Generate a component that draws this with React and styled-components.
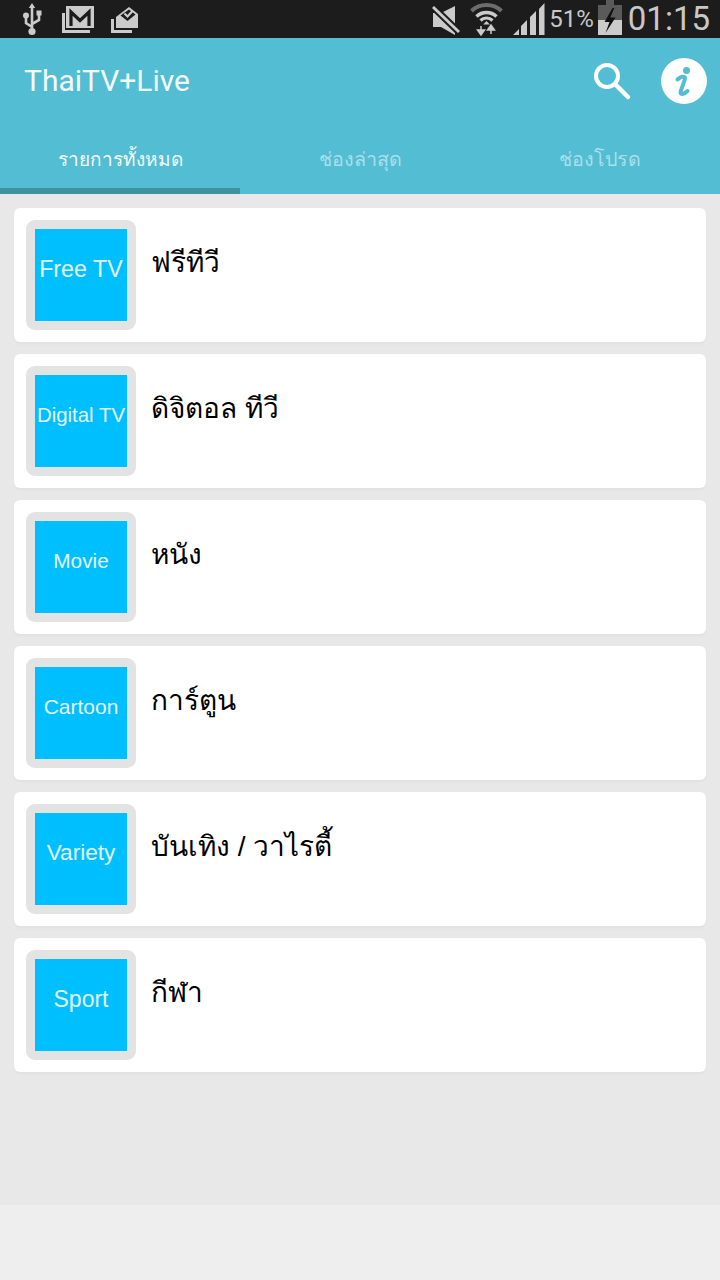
import React from "react";
import styled, { createGlobalStyle } from "styled-components";

const Global = createGlobalStyle`
  html, body { margin: 0; padding: 0; background: #eeeeee; }
  * { box-sizing: border-box; }
`;
const SANS = `"Liberation Sans", "Noto Sans", "DejaVu Sans", sans-serif`;

const Screen = styled.div`
  width: 720px; height: 1280px; display: flex; flex-direction: column; overflow: hidden;
  background: #eeeeee; font-family: ${SANS};
`;
const StatusBar = styled.div`
  height: 38px; background: #1c1c1c; display: flex; align-items: center; justify-content: space-between;
  padding: 0 10px 0 22px; color: #c8c8c8; flex: none;
`;
const StatusGroup = styled.div`display: flex; align-items: center;`;
const StatusIcon = styled.svg`
  display: block; height: 38px; flex: none; margin-left: ${p => p.$gap || 0}px;
`;
const Percent = styled.span`font: 24px Roboto, sans-serif; margin-left: 4px; line-height: 38px;`;
const Clock = styled.span`font: 33px Roboto, sans-serif; margin-left: 6px; line-height: 38px;`;
const AppBar = styled.div`flex: none; background: #52bdd3; height: 156px; display: flex; flex-direction: column;`;
const TitleRow = styled.div`
  height: 85px; display: flex; align-items: center; justify-content: space-between; padding: 0 13px 0 24px;
`;
const Title = styled.div`font: 30px Roboto, sans-serif; color: #f2fbfd;`;
const Actions = styled.div`display: flex; align-items: center; gap: 29px;`;
const ActionIcon = styled.svg`display: block; flex: none;`;
const Tabs = styled.div`flex: 1; display: flex;`;
const Tab = styled.div`
  flex: 1; display: flex; align-items: center; justify-content: center; padding-top: 7px;
  font-size: ${p => p.$active ? 19 : 19.7}px; color: ${p => p.$active ? "#f2fbfd" : "#a9dfea"};
  border-bottom: 6px solid ${p => p.$active ? "#3f929f" : "transparent"};
`;
const Content = styled.div`
  height: 1011px; flex: none; background: #e8e8e8; padding: 14px; display: flex; flex-direction: column; gap: 12px;
`;
const Card = styled.div`
  height: 134px; background: #fff; border-radius: 6px; padding: 12px; display: flex; gap: 15px;
  box-shadow: 0 2px 3px rgba(0,0,0,.03);
`;
const Thumb = styled.div`
  width: 110px; height: 110px; background: #e3e3e3; border-radius: 9px; padding: 9px; flex: none;
`;
const ThumbFace = styled.div`
  width: 92px; height: 92px; background: #00bfff; color: #e4f6fd; display: flex; align-items: center; justify-content: center;
  padding-bottom: 12px; font-size: ${p => p.$size}px; white-space: nowrap;
`;
const Label = styled.div`font-size: 28px; color: #000; line-height: 56px; height: 56px; margin-top: 15px;`;

const items = [
  ["Free TV", "ฟรีทีวี", 23.3], ["Digital TV", "ดิจิตอล ทีวี", 20.4], ["Movie", "หนัง", 20.8],
  ["Cartoon", "การ์ตูน", 21], ["Variety", "บันเทิง / วาไรตี้", 22.6], ["Sport", "กีฬา", 23],
];

const C = "#cbcbcb";
const Bg = "#1c1c1c";

const Usb = () => (
  <StatusIcon viewBox="22 0 20 38" width="20">
    <path d="M32 7v25M32 27l-6-4v-6M32 24l7-4v-6" fill="none" stroke={C} strokeWidth="2.6" />
    <path d="M32 3l3.2 5h-6.4z" fill={C} />
    <circle cx="26" cy="15.5" r="3" fill={C} />
    <rect x="36.5" y="10.5" width="5" height="5" fill={C} />
    <circle cx="32" cy="31.5" r="3.6" fill={C} />
  </StatusIcon>
);
const GmailStack = () => (
  <StatusIcon $gap={20} viewBox="62 0 32 38" width="32">
    <path d="M66 6h28v22H66z" fill={C} />
    <path d="M71 26V12l9 8.500 9-8.500v14" fill="none" stroke={Bg} strokeWidth="3.200" />
    <path d="M63.500 13v18.500H90" fill="none" stroke={C} strokeWidth="3" />
  </StatusIcon>
);
const MailCheck = () => (
  <StatusIcon $gap={16} viewBox="110 0 28 38" width="28">
    <path d="M116 17l13-10 9 7v14h-22z" fill={C} />
    <path d="M120.500 15.500l8.500-6 6.500 5-8 6.500z" fill={Bg} />
    <path d="M124.500 13.500l3 3 5-5.500" fill="none" stroke={C} strokeWidth="2.200" />
    <path d="M112.500 19v12.500H132" fill="none" stroke={C} strokeWidth="3" />
  </StatusIcon>
);
const Mute = () => (
  <StatusIcon viewBox="432 0 28 38" width="28">
    <path d="M433 13h8l14-7v29l-14-8h-8z" fill={C} />
    <path d="M431 5l29 28" stroke={Bg} strokeWidth="7" />
    <path d="M433 7l26 25" stroke={C} strokeWidth="3" />
  </StatusIcon>
);
const Wifi = () => (
  <StatusIcon $gap={10} viewBox="470 0 33 38" width="33">
    <path d="M471.500 11a22 22 0 0 1 30 0" fill="none" stroke="#6c6c6c" strokeWidth="4" />
    <path d="M476.500 16.500a14.500 14.500 0 0 1 20 0" fill="none" stroke={C} strokeWidth="3.500" />
    <path d="M480.500 20.500a8.500 8.500 0 0 1 12 0" fill="none" stroke={C} strokeWidth="3.200" />
    <path d="M486.500 21l-3.300 3.500h6.600z" fill={C} />
    <path d="M481 26v5M477.500 30h7l-3.500 5zM491 34v-5M487.500 30h7l-3.500-5z" fill={C} stroke={C} strokeWidth="1.500" />
  </StatusIcon>
);
const Signal = () => (
  <StatusIcon $gap={10} viewBox="513 0 32 38" width="32">
    <path d="M513 35l6-6v6zM521 35V26l6-6v15zM530 35V17l6-6v24zM539 35V9l5.500-6v32z" fill={C} />
  </StatusIcon>
);
const Battery = () => (
  <StatusIcon viewBox="598 0 24 38" width="24" $gap={4}>
    <rect x="606" y="0" width="8" height="5" fill="#5a5a5a" />
    <rect x="598" y="5" width="24" height="15" fill="#5a5a5a" />
    <rect x="598" y="20" width="24" height="15" fill={C} />
    <path d="M612.500 8l-8 14h5l-4 11 10-15.500h-5.200l4-9.500z" fill="#111" />
  </StatusIcon>
);
const Search = () => (
  <ActionIcon viewBox="0 0 38 38" width="38" height="38">
    <circle cx="13" cy="14" r="11" fill="none" stroke="#fff" strokeWidth="4" />
    <path d="M21.500 22.500l12.500 12.500" stroke="#fff" strokeWidth="4.500" strokeLinecap="round" />
  </ActionIcon>
);
const Info = () => (
  <ActionIcon viewBox="0 0 46 46" width="46" height="46">
    <circle cx="23" cy="23" r="23" fill="#fff" />
    <circle cx="25.500" cy="12.500" r="3.500" fill="#52bdd3" />
    <path d="M16.500 21.500c3-3 6.800-3.500 7.500-2 .7 1.800-4 11-4.500 15 0 2.200 3 2.300 7-1.500" fill="none" stroke="#52bdd3" strokeWidth="4" strokeLinecap="round" />
  </ActionIcon>
);

export default function App() {
  return (
    <Screen>
      <Global />
      <StatusBar>
        <StatusGroup>
          <Usb />
          <GmailStack />
          <MailCheck />
        </StatusGroup>
        <StatusGroup>
          <Mute />
          <Wifi />
          <Signal />
          <Percent>51%</Percent>
          <Battery />
          <Clock>01:15</Clock>
        </StatusGroup>
      </StatusBar>
      <AppBar>
        <TitleRow>
          <Title>ThaiTV+Live</Title>
          <Actions>
            <Search />
            <Info />
          </Actions>
        </TitleRow>
        <Tabs>
          <Tab $active>รายการทั้งหมด</Tab><Tab>ช่องล่าสุด</Tab><Tab>ช่องโปรด</Tab>
        </Tabs>
      </AppBar>
      <Content>
        {items.map(([en, th, size]) => (
          <Card key={en}>
            <Thumb><ThumbFace $size={size}>{en}</ThumbFace></Thumb>
            <Label>{th}</Label>
          </Card>
        ))}
      </Content>
    </Screen>
  );
}
